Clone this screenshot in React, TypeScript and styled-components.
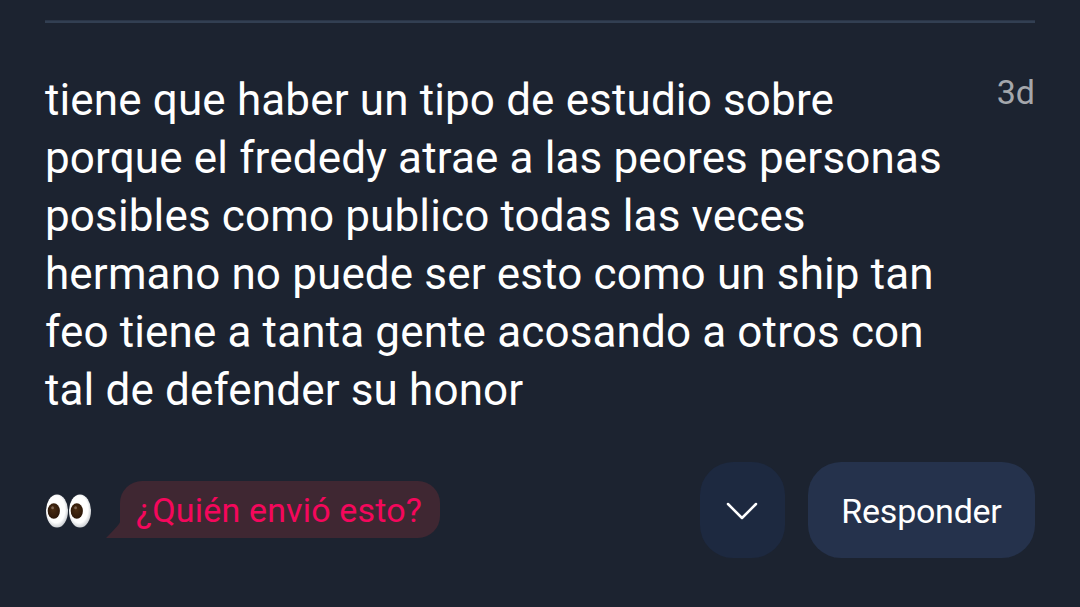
import * as React from 'react';
import styled, { createGlobalStyle } from 'styled-components';

const LINES = [
  'tiene que haber un tipo de estudio sobre',
  'porque el frededy atrae a las peores personas',
  'posibles como publico todas las veces',
  'hermano no puede ser esto como un ship tan',
  'feo tiene a tanta gente acosando a otros con',
  'tal de defender su honor',
];

function Eye({ x }: { x: number }) {
  return (
    <g transform={`translate(${x} 0)`}>
      <ellipse cx="11" cy="17" rx="11" ry="16.6" fill="url(#eyeball)" />
      <ellipse cx="7.8" cy="17" rx="6.1" ry="7.8" fill="url(#iris)" />
      <ellipse cx="6.6" cy="13.8" rx="1.4" ry="1.5" fill="#7d6552" />
    </g>
  );
}

function Eyes() {
  return (
    <EyesIcon viewBox="0 0 46 34">
      <defs>
        <radialGradient id="eyeball" cx="46%" cy="45%" r="56%">
          <stop offset="0.72" stopColor="#fefefe" />
          <stop offset="1" stopColor="#c9ccd0" />
        </radialGradient>
        <radialGradient id="iris" cx="45%" cy="40%" r="60%">
          <stop offset="0" stopColor="#4a2c12" />
          <stop offset="1" stopColor="#2b1608" />
        </radialGradient>
      </defs>
      <Eye x={1} />
      <Eye x={24} />
    </EyesIcon>
  );
}

export default function App() {
  return (
    <Card>
      <GlobalStyle />
      <Divider />
      <Message>
        <Question>
          {LINES.map(line => (
            <Line key={line}>{line}</Line>
          ))}
        </Question>
        <Age>3d</Age>
      </Message>
      <Footer>
        <Eyes />
        <Bubble>
          <Tail viewBox="0 0 14 16">
            <path d="M14 0Q13 3 0 16H14Z" fill="#3f2732" />
          </Tail>
          <BubbleText>¿Quién envió esto?</BubbleText>
        </Bubble>
        <MoreButton aria-label="Más opciones">
          <svg width="32" height="20" viewBox="0 0 32 20">
            <path
              d="M2 3L16 17L30 3"
              fill="none"
              stroke="#fff"
              strokeWidth="2.5"
              strokeLinecap="round"
              strokeLinejoin="round"
            />
          </svg>
        </MoreButton>
        <ReplyButton>Responder</ReplyButton>
      </Footer>
    </Card>
  );
}

const GlobalStyle = createGlobalStyle`
  body {
    margin: 0;
    background: #1c2330;
    font-family: Roboto, sans-serif;
  }
`;

const Card = styled.div`
  box-sizing: border-box;
  width: 1080px;
  height: 607px;
  padding: 20px 45px 0;
  background: #1c2330;
`;

const Divider = styled.div`
  height: 2px;
  border-top: 1px solid #2a3547;
  background: #323f52;
`;

const Message = styled.div`
  display: flex;
  justify-content: space-between;
  height: 391px;
  padding-top: 48px;
`;

const Question = styled.div`
  color: #fff;
  font-size: 44px;
  line-height: 58px;
  letter-spacing: 0.14px;
`;

const Line = styled.div`
  white-space: nowrap;
`;

const Age = styled.div`
  padding-top: 1px;
  color: #a4a7ac;
  font-size: 34px;
  line-height: 40px;
`;

const Footer = styled.div`
  display: flex;
  align-items: center;
  height: 96px;
`;

const EyesIcon = styled.svg`
  width: 46px;
  height: 34px;
  margin-top: 2px;
`;

const Bubble = styled.div`
  display: flex;
  align-items: flex-end;
  margin: 0 auto 1px 15px;
`;

const Tail = styled.svg`
  width: 14px;
  height: 16px;
`;

const BubbleText = styled.div`
  box-sizing: border-box;
  width: 320px;
  height: 57px;
  padding: 1px 0 0 16px;
  border-radius: 22px 22px 22px 0;
  background: #3f2732;
  color: #f5075c;
  font-size: 34px;
  line-height: 57px;
  letter-spacing: 0.17px;
  white-space: nowrap;
`;

const MoreButton = styled.button`
  display: flex;
  align-items: center;
  justify-content: center;
  width: 85px;
  height: 96px;
  margin-right: 23px;
  padding: 2px 1px 0 0;
  border: 0;
  border-radius: 33px;
  background: #1d2940;
`;

const ReplyButton = styled.button`
  width: 227px;
  height: 96px;
  padding: 2px 0 0;
  border: 0;
  border-radius: 33px;
  background: #25324c;
  color: #fff;
  font-family: inherit;
  font-size: 34px;
  letter-spacing: -0.25px;
`;
